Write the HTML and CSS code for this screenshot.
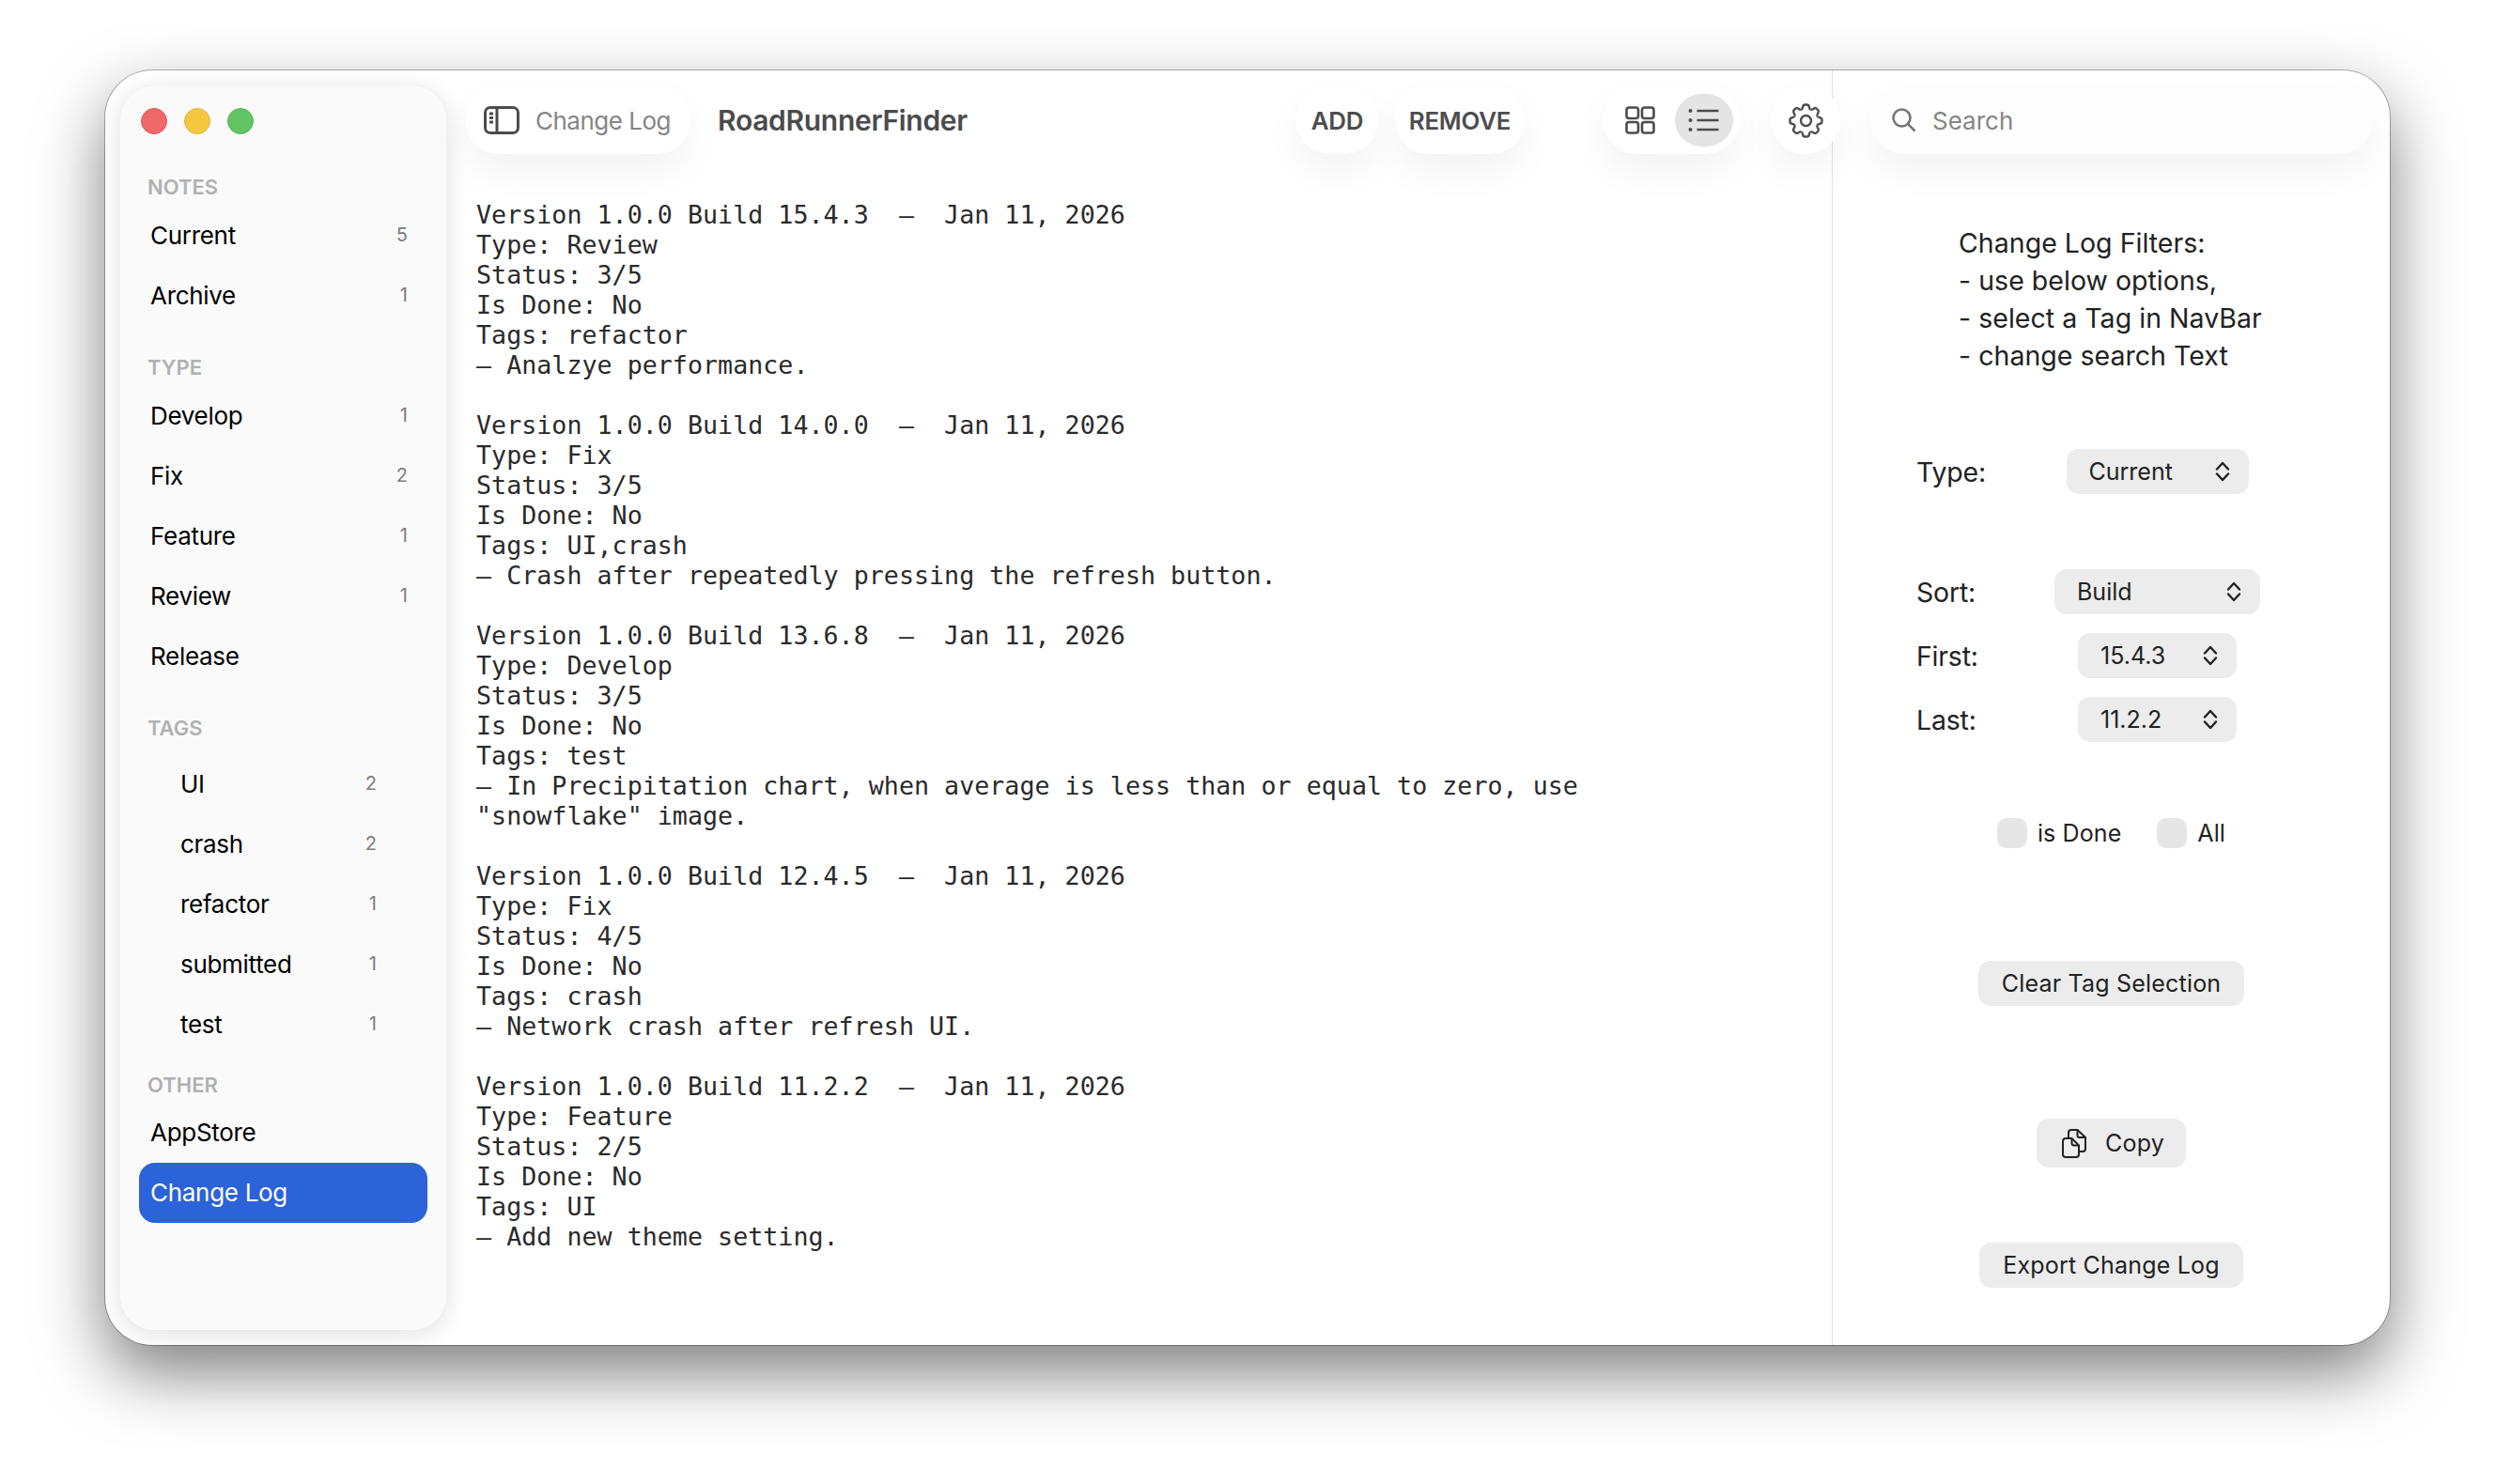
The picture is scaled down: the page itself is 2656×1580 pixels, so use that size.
FILE: index.html
```html
<!DOCTYPE html>
<html lang="en">
<head>
<meta charset="utf-8">
<title>RoadRunnerFinder</title>
<link rel="stylesheet" href="styles.css">
</head>
<body>
<svg class="sprites" width="0" height="0" aria-hidden="true">
  <defs>
    <symbol id="chev" viewBox="0 0 16 22"><path d="M2 8.5L8 2l6 6.5M2 13.5L8 20l6-6.5"/></symbol>
    <path id="tooth" d="M-4.97-12.01C-3.8-12.3-3.6-13.5-3.2-15.2C-2.9-16.6-2-17-1-17H1C2-17 2.9-16.6 3.2-15.2C3.6-13.5 3.8-12.3 4.97-12.01"/>
  </defs>
</svg>
<div class="window">
  <aside class="sidebar">
    <div class="lights"><span class="light red"></span><span class="light yellow"></span><span class="light green"></span></div>
    <div class="label">NOTES</div>
    <div class="row"><span>Current</span><span class="count">5</span></div>
    <div class="row"><span>Archive</span><span class="count">1</span></div>
    <div class="label gap">TYPE</div>
    <div class="row"><span>Develop</span><span class="count">1</span></div>
    <div class="row"><span>Fix</span><span class="count">2</span></div>
    <div class="row"><span>Feature</span><span class="count">1</span></div>
    <div class="row"><span>Review</span><span class="count">1</span></div>
    <div class="row"><span>Release</span></div>
    <div class="label gap tags-label">TAGS</div>
    <div class="row tag"><span>UI</span><span class="count">2</span></div>
    <div class="row tag"><span>crash</span><span class="count">2</span></div>
    <div class="row tag"><span>refactor</span><span class="count">1</span></div>
    <div class="row tag"><span>submitted</span><span class="count">1</span></div>
    <div class="row tag"><span>test</span><span class="count">1</span></div>
    <div class="label small-gap">OTHER</div>
    <div class="row"><span>AppStore</span></div>
    <div class="row selected"><span>Change Log</span></div>
  </aside>
  <main class="center">
    <header class="toolbar">
      <div class="pill crumb">
        <svg class="ico-side" viewBox="0 0 38 30"><rect x="1.5" y="1.5" width="35" height="27" rx="5.5"/><path d="M14 2v26M6 8h4M6 12.500h4M6 17h4"/></svg>
        <span>Change Log</span>
      </div>
      <h1 class="title">RoadRunnerFinder</h1>
      <div class="pill action add">ADD</div>
      <div class="pill action remove">REMOVE</div>
      <div class="pill segment">
        <span class="seg">
          <svg class="ico-grid" viewBox="0 0 32 30"><rect x="1.500" y="1.500" width="12.500" height="11.500" rx="2.500"/><rect x="18" y="1.500" width="12.500" height="11.500" rx="2.500"/><rect x="1.500" y="17" width="12.500" height="11.500" rx="2.500"/><rect x="18" y="17" width="12.500" height="11.500" rx="2.500"/></svg>
        </span>
        <span class="seg active">
          <svg class="ico-list" viewBox="0 0 34 24"><circle cx="2.500" cy="2" r="2"/><circle cx="2.500" cy="12" r="2"/><circle cx="2.500" cy="22" r="2"/><path d="M9.500 2h23M9.500 12h23M9.500 22h23"/></svg>
        </span>
      </div>
      <div class="pill gear">
        <svg class="ico-gear" viewBox="-18.500 -18.500 37 37">
          <use href="#tooth"/><use href="#tooth" transform="rotate(45)"/><use href="#tooth" transform="rotate(90)"/><use href="#tooth" transform="rotate(135)"/><use href="#tooth" transform="rotate(180)"/><use href="#tooth" transform="rotate(225)"/><use href="#tooth" transform="rotate(270)"/><use href="#tooth" transform="rotate(315)"/>
          <circle r="5.500"/>
        </svg>
      </div>
    </header>
<pre class="log">Version 1.0.0 Build 15.4.3  –  Jan 11, 2026
Type: Review
Status: 3/5
Is Done: No
Tags: refactor
– Analzye performance.

Version 1.0.0 Build 14.0.0  –  Jan 11, 2026
Type: Fix
Status: 3/5
Is Done: No
Tags: UI,crash
– Crash after repeatedly pressing the refresh button.

Version 1.0.0 Build 13.6.8  –  Jan 11, 2026
Type: Develop
Status: 3/5
Is Done: No
Tags: test
– In Precipitation chart, when average is less than or equal to zero, use
"snowflake" image.

Version 1.0.0 Build 12.4.5  –  Jan 11, 2026
Type: Fix
Status: 4/5
Is Done: No
Tags: crash
– Network crash after refresh UI.

Version 1.0.0 Build 11.2.2  –  Jan 11, 2026
Type: Feature
Status: 2/5
Is Done: No
Tags: UI
– Add new theme setting.</pre>
  </main>
  <section class="panel">
    <div class="pill search">
      <svg class="ico-search" viewBox="0 0 26 26"><circle cx="10.500" cy="10.500" r="9"/><path d="M17 17l7.500 7.500"/></svg>
      <span>Search</span>
    </div>
    <div class="hint">Change Log Filters:<br>- use below options,<br>- select a Tag in NavBar<br>- change search Text</div>
    <div class="field">
      <span>Type:</span>
      <div class="popup w-type"><span>Current</span><svg class="chev"><use href="#chev"/></svg></div>
    </div>
    <div class="field field-sort">
      <span>Sort:</span>
      <div class="popup w-sort"><span>Build</span><svg class="chev"><use href="#chev"/></svg></div>
    </div>
    <div class="field field-next">
      <span>First:</span>
      <div class="popup w-ver"><span>15.4.3</span><svg class="chev"><use href="#chev"/></svg></div>
    </div>
    <div class="field field-next">
      <span>Last:</span>
      <div class="popup w-ver"><span>11.2.2</span><svg class="chev"><use href="#chev"/></svg></div>
    </div>
    <div class="checks">
      <span class="box"></span><span class="check-label">is Done</span>
      <span class="box box-all"></span><span class="check-label">All</span>
    </div>
    <div class="btn btn-clear">Clear Tag Selection</div>
    <div class="btn btn-copy">
      <svg class="ico-copy" viewBox="0 0 26 31"><path d="M4 10h6.500L18 17.500V27a3 3 0 0 1-3 3H4a3 3 0 0 1-3-3V13a3 3 0 0 1 3-3z"/><path d="M10.500 10v5a2.500 2.500 0 0 0 2.500 2.500h5"/><path d="M7 9V4a3 3 0 0 1 3-3h6.500L25 9v12a3 3 0 0 1-3 3h-4"/><path d="M16.500 1v6a2 2 0 0 0 2 2H25"/></svg>
      <span>Copy</span>
    </div>
    <div class="btn btn-export">Export Change Log</div>
  </section>
</div>
</body>
</html>
```
FILE: styles.css
```css
* { box-sizing: border-box; }
html, body { margin: 0; padding: 0; background: #fff; }
body {
  width: 2656px;
  height: 1580px;
  padding: 75px 112px 0;
  overflow: hidden;
  font-family: Inter, "Liberation Sans", sans-serif;
  color: #222;
}
.sprites { position: absolute; }
svg { display: block; fill: none; stroke: #4c4c4c; }

.window {
  display: flex;
  width: 2432px;
  height: 1357px;
  background: #fff;
  border-radius: 50px;
  overflow: hidden;
  box-shadow: 0 0 0 1px rgba(0,0,0,.28), 0 30px 70px rgba(0,0,0,.5);
}

/* sidebar */
.sidebar {
  flex: none;
  width: 347px;
  height: 1324px;
  margin: 17px 0 0 16px;
  padding: 22px 19px 0;
  background: #fafafa;
  border: 1px solid #fdfdfd;
  border-radius: 36px;
  box-shadow: 0 4px 26px rgba(0,0,0,.13);
  position: relative;
  z-index: 1;
}
.lights { display: flex; gap: 18px; padding-left: 2px; margin-bottom: 36px; }
.light { width: 28px; height: 28px; border-radius: 50%; border: 1px solid; }
.red { background: #f0696a; border-color: #e2544f; }
.yellow { background: #f5c840; border-color: #e3b02f; }
.green { background: #62c464; border-color: #52b254; }
.label {
  height: 40px;
  line-height: 40px;
  padding-left: 9px;
  font-size: 22px;
  font-weight: 600;
  color: #b1b1b1;
}
.label.gap { margin-top: 24px; }
.label.tags-label { margin-bottom: 8px; }
.label.small-gap { margin-top: 12px; margin-bottom: -1px; }
.row {
  display: flex;
  align-items: center;
  justify-content: space-between;
  height: 64px;
  padding: 0 21px 2px 12px;
  font-size: 26px;
  letter-spacing: -.3px;
  color: #000;
}
.row.tag { padding: 0 54px 2px 44px; }
.row.selected { background: #2b63d9; color: #fff; border-radius: 17px; }
.count { font-size: 20px; color: #7d7d7d; letter-spacing: 0; }

/* center */
.center { flex: 1; min-width: 0; }
.toolbar {
  display: flex;
  align-items: center;
  height: 72px;
  margin: 17px -9px 0 20px;
  position: relative;
  z-index: 2;
}
.pill {
  display: flex;
  align-items: center;
  height: 72px;
  background: #fff;
  border-radius: 36px;
  box-shadow: 0 18px 40px rgba(0,0,0,.05);
}
.crumb { width: 240px; padding-left: 20px; color: #858585; font-size: 26px; gap: 17px; letter-spacing: -.5px; }
.ico-side { width: 38px; height: 30px; stroke-width: 3; }
.title { margin: 0 0 0 29px; font-size: 30px; font-weight: 600; color: #4b4b4b; letter-spacing: -.3px; }
.action { justify-content: center; margin-left: 18px; font-size: 26px; font-weight: 600; color: #4d4d4d; letter-spacing: -.3px; }
.action.add { margin-left: auto; width: 87px; }
.action.remove { width: 138px; }
.segment { margin-left: 83px; width: 146px; padding: 0 7px 0 24px; justify-content: space-between; }
.seg { display: flex; align-items: center; justify-content: center; }
.seg.active { width: 62px; height: 56px; background: #e4e4e4; border-radius: 28px; }
.ico-grid { width: 32px; height: 30px; stroke-width: 2.6; }
.ico-list { width: 34px; height: 24px; stroke-width: 2.6; }
.ico-list circle { fill: #4c4c4c; stroke: none; }
.gear { margin-left: 33px; width: 74px; justify-content: center; }
.ico-gear { width: 37px; height: 37px; stroke-width: 2.4; stroke-linejoin: round; }
.log {
  margin: 49px 0 0 32px;
  font-family: "DejaVu Sans Mono", "Liberation Mono", monospace;
  font-size: 26.700px;
  line-height: 32px;
  color: #2a2a2a;
}

/* right panel */
.panel {
  flex: none;
  width: 594px;
  border-left: 1px solid #e3e3e3;
  display: flex;
  flex-direction: column;
  align-items: center;
  padding-top: 17px;
}
.search {
  align-self: flex-start;
  width: 535px;
  margin-left: 40px;
  padding-left: 23px;
  gap: 17px;
  background: #fdfdfd;
  font-size: 26px;
  color: #858585;
}
.ico-search { width: 26px; height: 26px; stroke: #777; stroke-width: 2.600; }
.hint { align-self: flex-start; margin: 75px 0 2px 134px; font-size: 28.500px; line-height: 40px; letter-spacing: .03px; color: #222; }
.field {
  align-self: flex-start;
  display: grid;
  grid-template-columns: 147px 219px;
  justify-items: center;
  align-items: center;
  margin: 77px 0 0 89px;
  font-size: 28.500px;
  letter-spacing: -.2px;
}
.field > span { justify-self: start; }
.field-sort { margin-top: 80px; }
.field-next { margin-top: 20px; }
.popup {
  display: flex;
  align-items: center;
  justify-content: space-between;
  height: 48px;
  padding: 0 20px 0 24px;
  background: #ececec;
  border-radius: 13px;
  font-size: 25px;
  letter-spacing: 0;
}
.w-type { width: 194px; }
.w-sort { width: 219px; }
.w-ver { width: 169px; }
.chev { width: 16px; height: 22px; stroke: #222; stroke-width: 2.400; stroke-linecap: round; stroke-linejoin: round; }
.checks { display: flex; align-items: center; margin-top: 81px; font-size: 25px; letter-spacing: .1px; }
.box { width: 32px; height: 32px; background: #e6e6e6; border-radius: 10px; }
.box-all { margin-left: 38px; }
.check-label { margin-left: 11px; }
.btn {
  display: flex;
  align-items: center;
  justify-content: center;
  height: 48px;
  padding: 0 25px;
  background: #ececec;
  border-radius: 13px;
  font-size: 25px;
  letter-spacing: .2px;
}
.btn-clear { margin-top: 120px; }
.btn-copy { margin-top: 120px; width: 159px; height: 52px; gap: 20px; padding: 0 0 0 27px; justify-content: flex-start; }
.btn-export { margin-top: 80px; }
.ico-copy { width: 26px; height: 31px; stroke: #222; stroke-width: 2; }
```
